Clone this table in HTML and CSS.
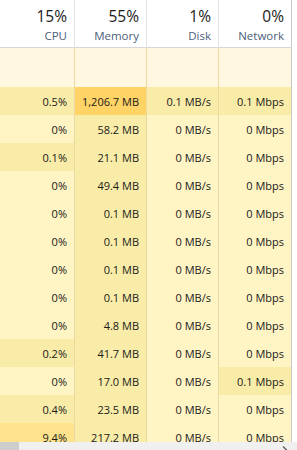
FILE: index.html
```html
<!DOCTYPE html>
<html>
<head>
<meta charset="utf-8">
<link rel="stylesheet" href="styles.css">
</head>
<body>
<div class="view">
  <div class="grid">
    <div class="hcell"><div class="pct">15%</div><div class="lbl">CPU</div></div>
    <div class="hcell"><div class="pct">55%</div><div class="lbl">Memory</div></div>
    <div class="hcell"><div class="pct">1%</div><div class="lbl">Disk</div></div>
    <div class="hcell last"><div class="pct">0%</div><div class="lbl">Network</div></div>

    <div class="gcell"></div><div class="gcell"></div><div class="gcell"></div><div class="gcell last"></div>

    <div class="c h1">0.5%</div><div class="c hm">1,206.7 MB</div><div class="c h1">0.1 MB/s</div><div class="c h1 last">0.1 Mbps</div>
    <div class="c h0">0%</div><div class="c h1">58.2 MB</div><div class="c h0">0 MB/s</div><div class="c h0 last">0 Mbps</div>
    <div class="c h1">0.1%</div><div class="c h1">21.1 MB</div><div class="c h0">0 MB/s</div><div class="c h0 last">0 Mbps</div>
    <div class="c h0">0%</div><div class="c h1">49.4 MB</div><div class="c h0">0 MB/s</div><div class="c h0 last">0 Mbps</div>
    <div class="c h0">0%</div><div class="c h1">0.1 MB</div><div class="c h0">0 MB/s</div><div class="c h0 last">0 Mbps</div>
    <div class="c h0">0%</div><div class="c h1">0.1 MB</div><div class="c h0">0 MB/s</div><div class="c h0 last">0 Mbps</div>
    <div class="c h0">0%</div><div class="c h1">0.1 MB</div><div class="c h0">0 MB/s</div><div class="c h0 last">0 Mbps</div>
    <div class="c h0">0%</div><div class="c h1">0.1 MB</div><div class="c h0">0 MB/s</div><div class="c h0 last">0 Mbps</div>
    <div class="c h0">0%</div><div class="c h1">4.8 MB</div><div class="c h0">0 MB/s</div><div class="c h0 last">0 Mbps</div>
    <div class="c h1">0.2%</div><div class="c h1">41.7 MB</div><div class="c h0">0 MB/s</div><div class="c h0 last">0 Mbps</div>
    <div class="c h0">0%</div><div class="c h1">17.0 MB</div><div class="c h0">0 MB/s</div><div class="c h1 last">0.1 Mbps</div>
    <div class="c h1">0.4%</div><div class="c h1">23.5 MB</div><div class="c h0">0 MB/s</div><div class="c h0 last">0 Mbps</div>
    <div class="c h2">9.4%</div><div class="c h1">217.2 MB</div><div class="c h0">0 MB/s</div><div class="c h0 last">0 Mbps</div>
  </div>
</div>
<div class="hscroll">
  <div class="thumb"></div>
  <svg class="arrow" width="6" height="8" viewBox="0 0 6 8"><path d="M1 0.5 L4.5 4 L1 7.5" fill="none" stroke="#606060" stroke-width="1.4"/></svg>
</div>
</body>
</html>
```

FILE: styles.css
```css
html, body {
  margin: 0;
  padding: 0;
  background: #ffffff;
  overflow: hidden;
}

body {
  width: 297px;
  height: 450px;
  font-family: "Open Sans", "Noto Sans", "Liberation Sans", sans-serif;
  color: #1a1a1a;
}

.view {
  height: 442px;
  overflow: hidden;
}

.grid {
  display: grid;
  grid-template-columns: 75px 72px 72px 73px;
  grid-auto-rows: auto;
  width: 296px;
}

.grid > div {
  border-right: 1px solid #ecd9a2;
  text-align: right;
  padding-right: 7px;
  white-space: nowrap;
}

.grid > .hcell {
  height: 47px;
  border-right-color: #e5e5e5;
  border-bottom: 1px solid #d6d6d6;
  background: #ffffff;
}

.grid > .last {
  border-right-color: #c9c9c9;
}

.pct {
  font-size: 15.5px;
  line-height: 20px;
  padding-top: 6px;
  color: #1a1a1a;
}

.lbl {
  font-size: 11.5px;
  line-height: 16px;
  margin-top: 2px;
  color: #4c607a;
}

.gcell {
  height: 39px;
  background: #fff7df;
}

.c {
  height: 28px;
  line-height: 27px;
  padding-top: 1px;
  font-size: 11px;
  box-sizing: border-box;
}

.h0 { background: #fff4c4; }
.h1 { background: #f9eca8; }
.h2 { background: #ffe38c; }
.hm { background: #ffd366; }

.hscroll {
  height: 8px;
  background: #f0f0f0;
  display: flex;
  align-items: flex-start;
  overflow: hidden;
}

.thumb {
  width: 19px;
  height: 8px;
  background: #cdcdcd;
}

.arrow {
  margin-left: auto;
  margin-right: 9px;
  margin-top: 4px;
  flex: none;
}
```
